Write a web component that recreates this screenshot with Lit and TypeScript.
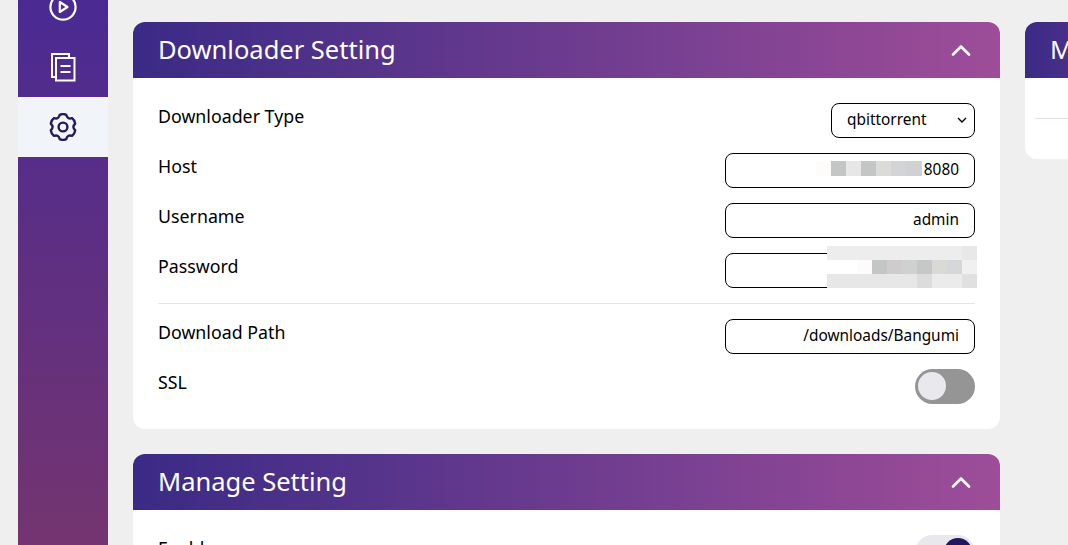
import { LitElement, html, css, svg } from "lit";
import { customElement } from "lit/decorators.js";

const hostCells = ["#fdfcfb","#c4c6c5","#e6e7e6","#c4c5c5","#dbdbd9","#d2d4d5","#d0d1d2"];
const passCells = [
  "#ededed","#ededed","#ededed","#ededed","#ededed","#ededed","#ededed","#ededed","#ededed","#e8e8e8",
  "#ffffff","#ffffff","#fdfcfb","#c4c6c5","#cfcdcb","#cfd1d1","#c6c7c7","#d9dad5","#d5d7da","#f0f0f0",
  "#e7e7e7","#e7e7e7","#e7e7e7","#e7e7e7","#e7e7e7","#e7e7e7","#dcdcdc","#ebebeb","#ebebeb","#e0e0e0",
];

function gearPath(): string {
  const c = 14;
  const pt = (deg: number, r: number) => {
    const a = (deg * Math.PI) / 180;
    return `${(c + r * Math.cos(a)).toFixed(2)} ${(c + r * Math.sin(a)).toFixed(2)}`;
  };
  let d = "";
  for (let i = 0; i < 6; i++) {
    const t = -90 + 60 * i;
    d += i === 0 ? `M${pt(t - 15, 12.6)}` : `L${pt(t - 15, 12.6)}`;
    d += `Q${pt(t, 13.6)} ${pt(t + 15, 12.6)}`;
    d += `Q${pt(t + 30, 8.6)} ${pt(t + 45, 12.6)}`;
  }
  return d + "Z";
}

const chevron = html`<svg class="chev" width="20" height="12" viewBox="0 0 20 12" fill="none" stroke="#fff" stroke-width="2.6" stroke-linecap="round" stroke-linejoin="round"><path d="M2 10.5 10 2.5l8 8"/></svg>`;

@customElement("app-root")
export class AppRoot extends LitElement {
  static styles = css`
    :host { display: block; width: 1068px; height: 545px; overflow: hidden; background: #efefef; font-family: "Noto Sans", "Open Sans", sans-serif; color: #000; }
    .page { display: flex; align-items: flex-start; height: 545px; padding-left: 18px; overflow: hidden; }
    .side { flex: none; width: 90px; height: 568px; margin-top: -23px; background: linear-gradient(180deg, #482a94 0%, #743470 100%); }
    .item { height: 60px; display: flex; align-items: center; justify-content: center; }
    .item.on { background: #f1f5fa; }
    .main { flex: none; width: 867px; margin-left: 25px; padding-top: 22px; display: flex; flex-direction: column; gap: 25px; }
    .right { flex: none; width: 300px; margin-left: 25px; padding-top: 22px; }
    .card { background: #fff; border-radius: 12px; overflow: hidden; }
    .head { height: 56px; box-sizing: border-box; padding: 0 29px 0 25px; display: flex; align-items: center; justify-content: space-between; background: linear-gradient(90deg, #3a2a86 0%, #9e4d98 100%); color: #fff; font-size: 25.5px; }
    .head span { margin-bottom: 2px; }
    .chev { display: block; }
    .body { padding: 25px 25px 25px; display: flex; flex-direction: column; }
    .row { height: 35px; display: flex; justify-content: space-between; align-items: flex-start; margin-bottom: 15px; font-size: 17.8px; line-height: 26px; position: relative; }
    .row.last { margin-bottom: 0; }
    .rule { height: 1px; background: #e3e3e8; margin: 0 0 15px; }
    .input { width: 250px; height: 35px; box-sizing: border-box; border: 1px solid #000; border-radius: 8px; padding: 0 15px 1px; display: flex; align-items: center; justify-content: flex-end; font-size: 15.4px; background: #fff; }
    .select { width: 144px; justify-content: space-between; padding-right: 7px; }
    .mosaic { position: absolute; display: grid; grid-auto-rows: 15px; }
    .host-m { left: 658px; top: 8px; grid-template-columns: repeat(6, 15px) 16px; }
    .pass-m { left: 669px; top: -7px; grid-template-columns: repeat(10, 15px); grid-auto-rows: 14px; }
    .toggle { width: 60px; height: 35px; border-radius: 18px; background: #959595; position: relative; }
    .knob { position: absolute; left: 3px; top: 3px; width: 28px; height: 28px; border-radius: 50%; background: #e9e9ed; }
    .toggle.on { background: #e9e9ed; }
    .toggle.on .knob { left: 29px; background: #241760; }
    .right .line { height: 1px; background: #e3e0f0; margin: 40px 0 0 10px; }
    .right .body { padding: 0 0 40px; display: block; }
    .right .head { padding-left: 25px; }
  `;

  render() {
    return html`<div class="page">
      <nav class="side">
        <div class="item">
          <svg width="30" height="30" viewBox="0 0 30 30" fill="none" stroke="#fff" stroke-width="2.2"><circle cx="15" cy="15" r="12.6"/><path d="M11.800 10v10l7.700-5z" stroke-linejoin="round"/></svg>
        </div>
        <div class="item">
          <svg width="26" height="30" viewBox="0 0 26 30" fill="none" stroke="#fff" stroke-width="2"><path d="M5.500 25H2V2h17v3"/><path d="M6 6h18.500v22.500H6z"/><path d="M10.500 14h10M10.500 20h10"/></svg>
        </div>
        <div class="item on">
          <svg width="28" height="28" viewBox="0 0 28 28" fill="none" stroke="#241a5c" stroke-width="2.4" stroke-linejoin="round">${svg`<circle cx="14" cy="14" r="4.400"/><path d=${gearPath()}/>`}</svg>
        </div>
      </nav>
      <main class="main">
        <section class="card">
          <div class="head"><span>Downloader Setting</span>${chevron}</div>
          <div class="body">
            <div class="row"><span>Downloader Type</span><div class="input select"><span>qbittorrent</span><svg width="10" height="6" viewBox="0 0 10 6" fill="none" stroke="#000" stroke-width="1.400"><path d="M1 1l4 4 4-4"/></svg></div></div>
            <div class="row"><span>Host</span><div class="input">8080</div>
              <div class="mosaic host-m">${hostCells.map((c) => html`<i style="background:${c}"></i>`)}</div></div>
            <div class="row"><span>Username</span><div class="input">admin</div></div>
            <div class="row"><span>Password</span><div class="input"></div>
              <div class="mosaic pass-m">${passCells.map((c) => html`<i style="background:${c}"></i>`)}</div></div>
            <div class="rule"></div>
            <div class="row"><span>Download Path</span><div class="input">/downloads/Bangumi</div></div>
            <div class="row last"><span>SSL</span><div class="toggle"><div class="knob"></div></div></div>
          </div>
        </section>
        <section class="card">
          <div class="head"><span>Manage Setting</span>${chevron}</div>
          <div class="body">
            <div class="row"><span>Enable</span><div class="toggle on"><div class="knob"></div></div></div>
          </div>
        </section>
      </main>
      <aside class="right">
        <section class="card">
          <div class="head"><span>Media Player</span></div>
          <div class="body"><div class="line"></div></div>
        </section>
      </aside>
    </div>`;
  }
}
